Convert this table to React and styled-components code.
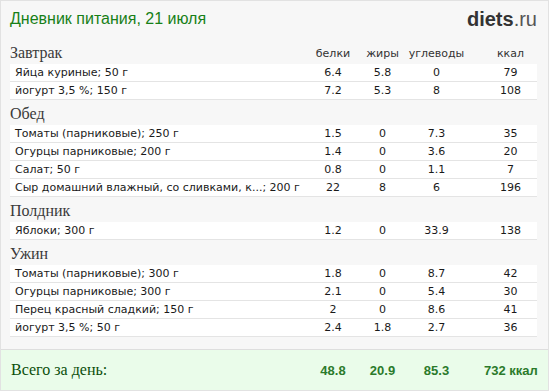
import React from "react";
import styled, { createGlobalStyle } from "styled-components";

const GlobalStyle = createGlobalStyle`
  body {
    margin: 0;
    background: #ffffff;
  }
`;

const meals = [
  {
    title: "Завтрак",
    items: [
      ["Яйца куриные; 50 г", "6.4", "5.8", "0", "79"],
      ["йогурт 3,5 %; 150 г", "7.2", "5.3", "8", "108"],
    ],
  },
  {
    title: "Обед",
    items: [
      ["Томаты (парниковые); 250 г", "1.5", "0", "7.3", "35"],
      ["Огурцы парниковые; 200 г", "1.4", "0", "3.6", "20"],
      ["Салат; 50 г", "0.8", "0", "1.1", "7"],
      ["Сыр домашний влажный, со сливками, к...; 200 г", "22", "8", "6", "196"],
    ],
  },
  {
    title: "Полдник",
    items: [["Яблоки; 300 г", "1.2", "0", "33.9", "138"]],
  },
  {
    title: "Ужин",
    items: [
      ["Томаты (парниковые); 300 г", "1.8", "0", "8.7", "42"],
      ["Огурцы парниковые; 300 г", "2.1", "0", "5.4", "30"],
      ["Перец красный сладкий; 150 г", "2", "0", "8.6", "41"],
      ["йогурт 3,5 %; 50 г", "2.4", "1.8", "2.7", "36"],
    ],
  },
];

const App = () => {
  return (
    <>
      <GlobalStyle />
      <Panel>
        <Top>
          <Title>Дневник питания, 21 июля</Title>
          <Logo>
            <b>diets</b>.ru
          </Logo>
        </Top>
        <Body>
          {meals.map((meal, i) => (
            <section key={meal.title}>
              <SectionHead>
                <MealName>{meal.title}</MealName>
                {i === 0 && (
                  <>
                    <Label>белки</Label>
                    <Label>жиры</Label>
                    <Label>углеводы</Label>
                    <Label $last>ккал</Label>
                  </>
                )}
              </SectionHead>
              {meal.items.map((item) => (
                <Row key={item[0]}>
                  <Name>{item[0]}</Name>
                  <Value>{item[1]}</Value>
                  <Value>{item[2]}</Value>
                  <Value>{item[3]}</Value>
                  <Value $last>{item[4]}</Value>
                </Row>
              ))}
            </section>
          ))}
        </Body>
        <Footer>
          <TotalLabel>Всего за день:</TotalLabel>
          <Total>48.8</Total>
          <Total>20.9</Total>
          <Total>85.3</Total>
          <Total $last>732 ккал</Total>
        </Footer>
      </Panel>
    </>
  );
};

export default App;

const columns = "1fr 50px 49px 59px 71px";

const Panel = styled.div`
  width: 549px;
  height: 391px;
  box-sizing: border-box;
  border: 1px solid #e2e2e2;
  background-color: #f7f7f7;
  display: flex;
  flex-direction: column;
`;

const Top = styled.header`
  height: 38px;
  box-sizing: border-box;
  display: flex;
  justify-content: space-between;
  align-items: flex-start;
  padding: 8px 11px 0 9px;
`;

const Title = styled.h1`
  margin: 0;
  font-family: "Liberation Sans", Arial, sans-serif;
  font-weight: 400;
  font-size: 16px;
  line-height: 20px;
  color: #178017;
`;

const Logo = styled.div`
  margin-top: -1px;
  font-family: "Liberation Sans", Arial, sans-serif;
  font-size: 20px;
  line-height: 22px;
  color: #555555;
  b {
    color: #333333;
    font-weight: 700;
  }
`;

const Body = styled.div`
  flex: 1;
  padding: 0 11px 0 9px;
`;

const SectionHead = styled.div`
  height: 25px;
  display: grid;
  grid-template-columns: ${columns};
  align-items: end;
  padding-bottom: 3px;
  box-sizing: border-box;
`;

const MealName = styled.div`
  font-family: "Liberation Serif", Georgia, serif;
  font-size: 16px;
  line-height: 16px;
  color: #3a3a3a;
`;

const Label = styled.div`
  font-family: "DejaVu Sans", Verdana, sans-serif;
  font-size: 11px;
  line-height: 14px;
  color: #333333;
  text-align: center;
  padding-left: ${(p) => (p.$last ? "18px" : "0")};
`;

const Row = styled.div`
  height: 18px;
  box-sizing: border-box;
  display: grid;
  grid-template-columns: ${columns};
  align-items: center;
  background-color: #ffffff;
  border-bottom: 1px solid #e4e4e4;
  font-family: "DejaVu Sans", Verdana, sans-serif;
  font-size: 11px;
  color: #1a1a1a;
`;

const Name = styled.div`
  padding-left: 5px;
  white-space: nowrap;
`;

const Value = styled.div`
  text-align: center;
  padding-left: ${(p) => (p.$last ? "18px" : "0")};
`;

const Footer = styled.footer`
  height: 41px;
  box-sizing: border-box;
  display: grid;
  grid-template-columns: ${columns};
  align-items: center;
  padding: 0 11px 0 9px;
  background-color: #eafcea;
  border-top: 1px solid #dedede;
`;

const TotalLabel = styled.div`
  padding-left: 1px;
  font-family: "Liberation Serif", Georgia, serif;
  font-size: 16px;
  color: #0b4f0b;
`;

const Total = styled.div`
  text-align: center;
  white-space: nowrap;
  padding-left: ${(p) => (p.$last ? "18px" : "0")};
  font-family: "Liberation Sans", Arial, sans-serif;
  font-weight: 700;
  font-size: 13px;
  color: #2b7a2b;
`;
